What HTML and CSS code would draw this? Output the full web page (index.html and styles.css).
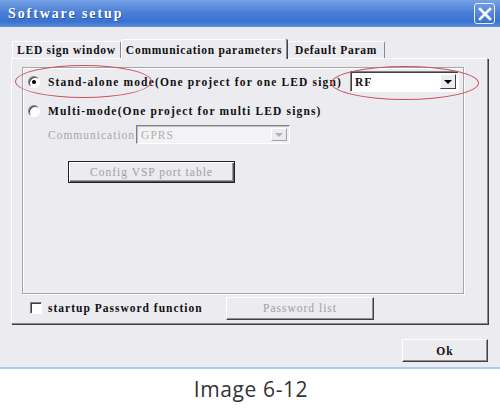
FILE: index.html
```html
<!DOCTYPE html>
<html lang="en">
<head>
    <meta charset="UTF-8">
    <title>Software setup</title>
    <link rel="stylesheet" href="styles.css">
</head>
<body>
    <div class="dialog">
        <div class="titlebar">
            <span class="title">Software setup</span>
            <span class="close">
                <svg width="14" height="14" viewBox="0 0 14 14"><path d="M2 2 L12 12 M12 2 L2 12" stroke="#fff" stroke-width="2.6" stroke-linecap="square"/></svg>
            </span>
        </div>

        <div class="tabs">
            <div class="tab tab-led">LED sign window</div>
            <div class="tab tab-comm active">Communication parameters</div>
            <div class="tab tab-default">Default Param</div>
        </div>

        <div class="panel">
            <div class="group">
                <div class="row row-mode">
                    <label class="option">
                        <span class="radio checked"></span>
                        <span>Stand-alone mode(One project for one LED sign)</span>
                    </label>
                    <div class="select select-rf">
                        <span class="select-value">RF</span>
                        <span class="arrow"><i></i></span>
                    </div>
                </div>
                <div class="row row-multi">
                    <label class="option">
                        <span class="radio"></span>
                        <span>Multi-mode(One project for multi LED signs)</span>
                    </label>
                </div>
                <div class="row row-comm">
                    <span class="label-disabled">Communication</span>
                    <div class="select select-gprs disabled">
                        <span class="select-value">GPRS</span>
                        <span class="arrow"><i></i></span>
                    </div>
                </div>
                <div class="row row-config">
                    <button class="btn btn-config" disabled>Config VSP port table</button>
                </div>
            </div>

            <div class="password-row">
                <label class="check-label">
                    <span class="checkbox"></span>
                    <span>startup Password function</span>
                </label>
                <button class="btn btn-password" disabled>Password list</button>
            </div>
        </div>

        <div class="footer-row">
            <button class="btn btn-ok">Ok</button>
        </div>

        <!-- red markers drawn over the screenshot -->
        <span class="mark mark-mode"></span>
        <span class="mark mark-rf"></span>
    </div>

    <div class="caption">Image 6-12</div>
</body>
</html>
```

FILE: styles.css
```css
* {
    box-sizing: border-box;
    margin: 0;
    padding: 0;
}
body {
    width: 500px;
    height: 410px;
    background-color: #fff;
    font-family: 'Liberation Serif', 'DejaVu Serif', serif;
    font-size: 11.5px;
    letter-spacing: 1px;
    color: #111;
    overflow: hidden;
}
.dialog {
    position: relative;
    height: 369px;
    background-color: #ecebf0;
    border-bottom: 2px solid #a9cdee;
}
.titlebar {
    height: 27px;
    display: flex;
    align-items: center;
    justify-content: space-between;
    padding: 0 5px 0 8px;
    background: linear-gradient(#77a2e4, #4a7fd6 45%, #3a72d2 80%, #5d8fdc);
}
.title {
    color: #fff;
    font-weight: bold;
    font-size: 14px;
    letter-spacing: 1.9px;
    text-shadow: 1px 1px 0 #2a56a8;
}
.close {
    width: 21px;
    height: 21px;
    display: flex;
    align-items: center;
    justify-content: center;
    border: 1px solid #e8eefa;
    border-radius: 3px;
    background: linear-gradient(#6e9ae6, #3b6fd4);
}
.tabs {
    display: flex;
    align-items: flex-end;
    height: 31px;
    padding-left: 12px;
}
.tab {
    height: 17px;
    display: flex;
    align-items: center;
    justify-content: center;
    font-weight: bold;
    letter-spacing: 0.75px;
    border-left: 1px solid #fff;
    border-top: 1px solid #fff;
    border-right: 1px solid #8a8a8a;
    border-radius: 2px 2px 0 0;
}
.tab-led {
    width: 109px;
}
.tab-comm {
    width: 166px;
}
.tab-default {
    width: 98px;
}
.tab.active {
    height: 20px;
    position: relative;
    z-index: 1;
    margin-bottom: -1px;
    background-color: #ecebf0;
    box-shadow: 1px 0 0 #404040;
}
.panel {
    margin-left: 11px;
    width: 477px;
    height: 266px;
    padding: 8px 10px 0 10px;
    border-top: 1px solid #fff;
    border-left: 1px solid #fff;
    border-right: 1px solid #8a8a8a;
    border-bottom: 1px solid #8a8a8a;
    box-shadow: 1px 1px 0 #404040;
}
.group {
    width: 442px;
    height: 227px;
    padding: 3px 4px 0 5px;
    border: 1px solid #a6a6a6;
    box-shadow: inset 1px 1px 0 #fff, 1px 1px 0 #fff;
}
.row {
    display: flex;
    align-items: center;
}
.row-mode {
    height: 21px;
    justify-content: space-between;
}
.row-multi {
    height: 16px;
    margin-top: 11px;
}
.row-comm {
    height: 19px;
    margin-top: 6px;
    padding-left: 20px;
}
.row-config {
    margin-top: 17px;
    padding-left: 40px;
}
.option {
    display: flex;
    align-items: center;
    gap: 8px;
    font-weight: bold;
    letter-spacing: 1.15px;
    white-space: nowrap;
}
.radio {
    flex: none;
    width: 12px;
    height: 12px;
    border-radius: 50%;
    background-color: #fff;
    border: 1px solid;
    border-color: #808080 #fff #fff #808080;
    box-shadow: inset 1px 1px 0 #404040;
    display: flex;
    align-items: center;
    justify-content: center;
}
.radio.checked::after {
    content: "";
    width: 4px;
    height: 4px;
    border-radius: 50%;
    background-color: #000;
}
.select {
    flex: none;
    height: 21px;
    display: flex;
    align-items: center;
    justify-content: space-between;
    background-color: #fff;
    border: 1px solid;
    border-color: #808080 #fff #fff #808080;
    box-shadow: inset 1px 1px 0 #404040;
    padding: 2px 2px 2px 4px;
}
.select-rf {
    width: 109px;
    font-weight: bold;
}
.select-gprs {
    width: 154px;
    height: 19px;
    margin-left: 1px;
}
.select.disabled {
    background-color: #f3f3f5;
    color: #b0b0b0;
    box-shadow: inset 1px 1px 0 #c0c0c0;
}
.select-value {
    padding-top: 1px;
}
.arrow {
    width: 16px;
    height: 100%;
    display: flex;
    align-items: center;
    justify-content: center;
    background-color: #ecebf0;
    border: 1px solid;
    border-color: #fff #404040 #404040 #fff;
}
.arrow i {
    width: 0;
    height: 0;
    border-left: 4px solid transparent;
    border-right: 4px solid transparent;
    border-top: 4px solid #000;
}
.disabled .arrow {
    border-color: #fff #a0a0a0 #a0a0a0 #fff;
}
.disabled .arrow i {
    border-top-color: #b0b0b0;
}
.label-disabled {
    color: #a8a8a8;
}
.btn {
    font-family: inherit;
    font-size: inherit;
    letter-spacing: inherit;
    background-color: #ecebf0;
    border: 1px solid;
    border-color: #fff #404040 #404040 #fff;
    box-shadow: inset -1px -1px 0 #909090;
    color: #a0a0a0;
}
.btn-config {
    width: 167px;
    height: 22px;
    border: 1px solid #222;
    box-shadow: inset 1px 1px 0 #fff, inset -1px -1px 0 #555, inset -2px -2px 0 #999;
}
.password-row {
    display: flex;
    align-items: center;
    height: 24px;
    margin-top: 2px;
}
.check-label {
    display: flex;
    align-items: center;
    gap: 6px;
    width: 204px;
    padding-left: 8px;
    font-weight: bold;
    white-space: nowrap;
}
.checkbox {
    flex: none;
    width: 12px;
    height: 12px;
    background-color: #fff;
    border: 1px solid;
    border-color: #808080 #fff #fff #808080;
    box-shadow: inset 1px 1px 0 #404040;
}
.btn-password {
    width: 148px;
    height: 23px;
}
.footer-row {
    display: flex;
    justify-content: flex-end;
    width: 488px;
    margin-top: 15px;
}
.btn-ok {
    width: 86px;
    height: 23px;
    color: #111;
    font-weight: bold;
}
.mark {
    position: absolute;
    border: 1.5px solid #c9525e;
    border-radius: 50%;
}
.mark-mode {
    left: 15px;
    top: 65px;
    width: 137px;
    height: 33px;
}
.mark-rf {
    left: 331px;
    top: 66px;
    width: 148px;
    height: 34px;
}
.caption {
    height: 39px;
    display: flex;
    align-items: center;
    justify-content: center;
    padding-left: 2px;
    font-family: 'Open Sans', 'Noto Sans', sans-serif;
    font-size: 21px;
    letter-spacing: 0.6px;
    color: #333;
}
```
